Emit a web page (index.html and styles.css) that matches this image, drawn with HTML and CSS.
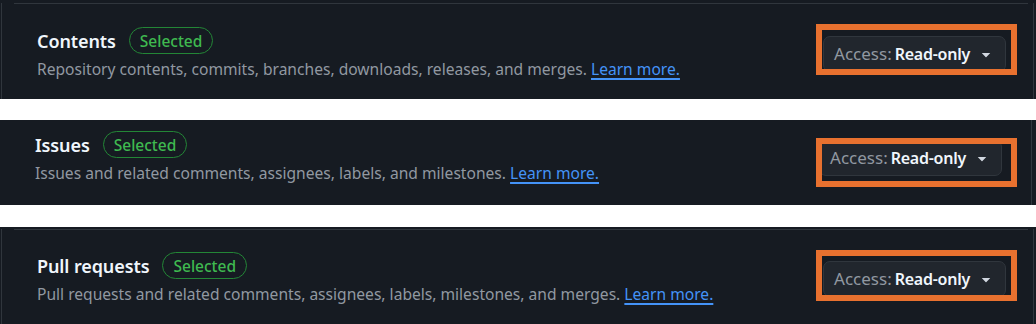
FILE: index.html
```html
<!DOCTYPE html>
<html lang="en">
<head>
<meta charset="utf-8">
<title>Repository permissions</title>
<link rel="stylesheet" href="styles.css">
</head>
<body>
  <section class="shot shot--contents">
    <div class="box">
      <div class="row">
        <div class="info">
          <div class="title-line">
            <h3 class="title">Contents</h3>
            <span class="badge">Selected</span>
          </div>
          <p class="desc">Repository contents, commits, branches, downloads, releases, and merges. <a class="link" href="#">Learn more.</a></p>
        </div>
        <button class="btn" type="button">
          <span class="btn-label">Access:</span>
          <span class="btn-value">Read-only</span>
          <svg class="caret" viewBox="0 0 16 16" width="16" height="16" aria-hidden="true"><path d="m4.427 7.427 3.396 3.396a.25.25 0 0 0 .354 0l3.396-3.396A.25.25 0 0 0 11.396 7H4.604a.25.25 0 0 0-.177.427Z"/></svg>
        </button>
      </div>
    </div>
    <div class="callout"></div>
  </section>

  <section class="shot shot--issues">
    <div class="box">
      <div class="row">
        <div class="info">
          <div class="title-line">
            <h3 class="title">Issues</h3>
            <span class="badge">Selected</span>
          </div>
          <p class="desc">Issues and related comments, assignees, labels, and milestones. <a class="link" href="#">Learn more.</a></p>
        </div>
        <button class="btn" type="button">
          <span class="btn-label">Access:</span>
          <span class="btn-value">Read-only</span>
          <svg class="caret" viewBox="0 0 16 16" width="16" height="16" aria-hidden="true"><path d="m4.427 7.427 3.396 3.396a.25.25 0 0 0 .354 0l3.396-3.396A.25.25 0 0 0 11.396 7H4.604a.25.25 0 0 0-.177.427Z"/></svg>
        </button>
      </div>
    </div>
    <div class="callout"></div>
  </section>

  <section class="shot shot--pulls">
    <div class="box">
      <div class="row">
        <div class="info">
          <div class="title-line">
            <h3 class="title">Pull requests</h3>
            <span class="badge">Selected</span>
          </div>
          <p class="desc">Pull requests and related comments, assignees, labels, milestones, and merges. <a class="link" href="#">Learn more.</a></p>
        </div>
        <button class="btn" type="button">
          <span class="btn-label">Access:</span>
          <span class="btn-value">Read-only</span>
          <svg class="caret" viewBox="0 0 16 16" width="16" height="16" aria-hidden="true"><path d="m4.427 7.427 3.396 3.396a.25.25 0 0 0 .354 0l3.396-3.396A.25.25 0 0 0 11.396 7H4.604a.25.25 0 0 0-.177.427Z"/></svg>
        </button>
      </div>
    </div>
    <div class="callout"></div>
  </section>
</body>
</html>
```
FILE: styles.css
```css
* { box-sizing: border-box; }

html, body {
  margin: 0;
  padding: 0;
  background: #ffffff;
}

body {
  width: 1036px;
  font-family: "Noto Sans", "Open Sans", sans-serif;
  -webkit-font-smoothing: antialiased;
}

.shot {
  position: relative;
  background: #161b22;
  overflow: hidden;
}

.shot--contents { height: 99px; margin-bottom: 21px; }
.shot--issues   { height: 85px; margin-bottom: 22px; }
.shot--pulls    { height: 97px; }

.box {
  height: 100%;
  border-right: 1px solid #30363d;
}

.shot--contents .box,
.shot--pulls .box {
  margin: 0 2px 0 1px;
  border-left: 1px solid #30363d;
}

.shot--issues .box {
  margin: 0 4px 0 0;
}

.row {
  display: flex;
  align-items: center;
  justify-content: space-between;
}

.shot--contents .row {
  margin: 3px 5px 0 12px;
  border-top: 1px solid #30363d;
  padding: 23px 22px 0 23px;
}

.shot--issues .row {
  padding: 11px 29px 0 35px;
}

.shot--pulls .row {
  margin: 2px 5px 0 12px;
  border-top: 1px solid #30363d;
  padding: 22px 22px 0 23px;
}

.info {
  display: flex;
  flex-direction: column;
}

.title-line {
  display: flex;
  align-items: center;
  gap: 13px;
  height: 27px;
}

.title {
  margin: 0;
  font-size: 18px;
  font-weight: 600;
  color: #f0f6fc;
  letter-spacing: -0.1px;
}

.badge {
  display: inline-flex;
  align-items: center;
  height: 27px;
  padding: 0 10px;
  border: 1px solid #238636;
  border-radius: 14px;
  color: #3fb950;
  font-size: 15.5px;
  font-weight: 500;
}

.desc {
  margin: 4px 0 0;
  font-size: 15.6px;
  line-height: 22px;
  color: #9198a1;
  white-space: nowrap;
}

.link {
  color: #4493f8;
  text-decoration: underline;
  text-decoration-thickness: 2px;
  text-underline-offset: 3px;
}

.btn {
  display: inline-flex;
  align-items: center;
  height: 36px;
  padding: 0 10px 0 10px;
  background: #21262d;
  border: 1px solid #30363d;
  border-radius: 7px;
  font-family: inherit;
  cursor: pointer;
}

.btn-label {
  color: #9198a1;
  font-size: 17px;
  font-weight: 400;
  margin-right: 3px;
}

.btn-value {
  color: #f0f6fc;
  font-size: 16px;
  font-weight: 600;
  letter-spacing: -0.25px;
}

.caret {
  margin-left: 7px;
  width: 18px;
  height: 18px;
  fill: #d1d7e0;
}

.callout {
  position: absolute;
  left: 816px;
  width: 201px;
  border: 6px solid #e8712f;
  pointer-events: none;
}

.shot--contents .callout { top: 24px; height: 51px; }
.shot--issues .callout   { top: 18px; height: 49px; }
.shot--pulls .callout    { top: 23px; height: 51px; }
```
